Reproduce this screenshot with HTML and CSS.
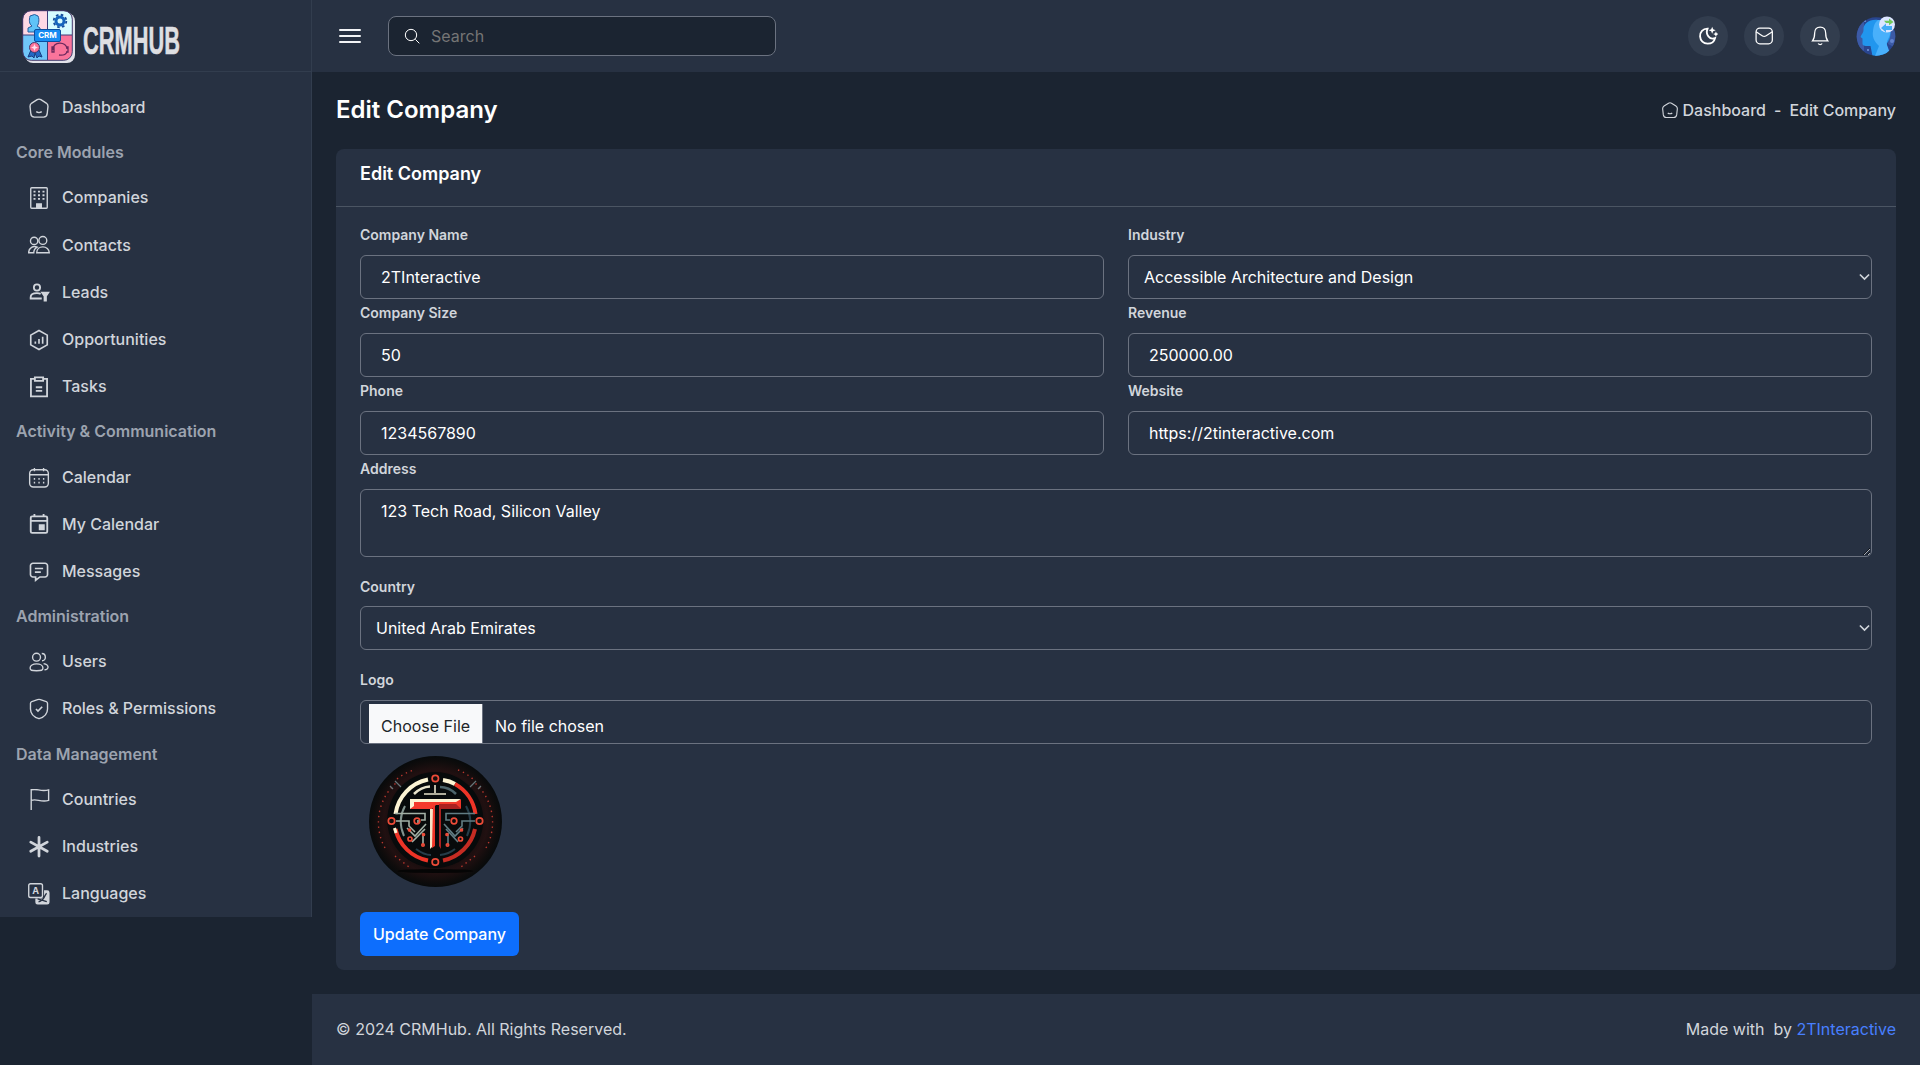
FILE: index.html
```html
<!DOCTYPE html>
<html lang="en">
<head>
<meta charset="utf-8">
<title>Edit Company - CRMHub</title>
<link rel="stylesheet" href="styles.css">
</head>
<body>
<svg class="sprite" aria-hidden="true">
  <symbol id="home" viewBox="0 0 24 24"><path d="M4.1 6.6 10 2.9a3.8 3.8 0 0 1 4 0l5.9 3.7c1.5 1 2 2 1.900 3.700l-.9 8.200c-.3 2.200-1.700 3.500-3.900 3.500H7c-2.200 0-3.600-1.300-3.900-3.500l-.9-8.200C2.100 8.600 2.600 7.600 4.100 6.600zM9 16c.9.700 1.900 1 3 1s2.100-.3 3-1"/></symbol>
  <symbol id="building" viewBox="0 0 24 24"><rect x="3" y=".8" width="18" height="22.400" rx="1"/><path d="M9.500 23v-4.500h5V23z" fill="currentColor"/><path class="dots" d="M6 5h2.200M10.900 5h2.200M15.800 5H18M6 9h2.200M10.900 9h2.200M15.800 9H18M6 13h2.200M10.900 13h2.200M15.800 13H18"/></symbol>
  <symbol id="contacts" viewBox="0 0 24 24"><circle cx="6.700" cy="7.500" r="4"/><circle cx="16.200" cy="7" r="4.300"/><path d="M9.500 20.500c0-4 3-6.500 6.700-6.500s7 2.500 7 6.500zM10 14.300c-4-2-9.300.7-9.300 6.200h5.600c0-2.700 1.200-4.800 3.700-6.200z"/></symbol>
  <symbol id="leads" viewBox="0 0 24 24"><g class="bold"><circle cx="9.800" cy="6" r="3.400"/><path d="M15 18H2.900v-1.500c0-3 3.300-4.400 6.900-4.400 1.700 0 3 .3 4 .8"/></g><path d="M15 11.500h7.500l-2.700 4v5h-2v-5z" fill="currentColor"/></symbol>
  <symbol id="chart" viewBox="0 0 24 24"><g class="mid"><path d="M12 1.700 21 6.700v10.600l-9 5-9-5V6.700zM8 13.500V16M12 11v5M16 8.500V16"/></g></symbol>
  <symbol id="task" viewBox="0 0 24 24"><g class="bold"><path d="M7 3.200H3.200v19h17.600v-19H17M7.500 1.500h9v3.800h-9zM8.500 12.300h7M8.500 16.300h7"/></g></symbol>
  <symbol id="calendar" viewBox="0 0 24 24"><rect x="1.800" y="3" width="20.400" height="18.800" rx="4"/><path d="M2 8.500h20M7 1v3.500M17 1v3.500"/><path class="dots" d="M6.300 13h1.500M11.300 13h1.500M16.300 13h1.500M6.300 17h1.500M11.300 17h1.500M16.300 17h1.500"/></symbol>
  <symbol id="mycal" viewBox="0 0 24 24"><g class="bold"><rect x="3" y="2.500" width="18" height="18" rx="1.500"/><path d="M3 7.500h18M7 0v3M17 0v3"/></g><path d="M12.500 12h5v5h-5z" fill="currentColor"/></symbol>
  <symbol id="message" viewBox="0 0 24 24"><g class="mid"><path d="M5.500 2.500h13a2.700 2.700 0 0 1 2.800 2.700v9.500a2.700 2.700 0 0 1-2.800 2.700H13L8.300 21v-3.600H5.500a2.700 2.700 0 0 1-2.800-2.700V5.200a2.700 2.700 0 0 1 2.800-2.700zM7.500 8.200h9M7.500 12.200h6.500"/></g></symbol>
  <symbol id="users" viewBox="0 0 24 24"><circle cx="9.300" cy="6.800" r="4.300"/><path d="M2.300 18.500c0-2.700 3-4.500 7-4.500s7 1.800 7 4.500-1.500 3-7 3-7-.3-7-3zM15 2.700c5.200 0 5.200 8 .3 8M17 13.800c6.600 1.200 6 6.700 1 6.700"/></symbol>
  <symbol id="shield" viewBox="0 0 24 24"><path d="M12 1.500c2 0 5 1.800 8 2.400 1 .3 1.300.8 1.300 2v6c0 5.300-3.700 8.800-9.300 10.700C6.400 20.700 2.700 17.200 2.700 11.900v-6c0-1.200.3-1.700 1.300-2C7 3.300 10 1.500 12 1.500z"/><path d="m8.700 12 2.200 2.200 4.600-4.700" class="mid"/></symbol>
  <symbol id="flag" viewBox="0 0 24 24"><path d="M3.500 0v23M3.500 1c6-2 10 2.300 19 0v11.500c-9 2.300-13-2.300-19 0"/></symbol>
  <symbol id="asterisk" viewBox="0 0 24 24"><path d="M12 1.500v20.400M3 6.700l18 10M21 6.700l-18 10" stroke-width="3" stroke-linecap="round"/></symbol>
  <symbol id="language" viewBox="0 0 24 24"><path d="M17.500 8H21a2.500 2.500 0 0 1 2.500 2.500V21a2.500 2.500 0 0 1-2.500 2.500H10.500A2.500 2.500 0 0 1 8 21v-4h7.500a2 2 0 0 0 2-2z" fill="currentColor" stroke="none"/><rect x=".8" y=".8" width="15" height="15" rx="2"/><text class="glyph" x="8.300" y="12.300">A</text><path class="knock" d="M20.500 11.500c-2.500 0-2 8-9 9M10.500 17.300l10 3"/></symbol>
  <symbol id="moon" viewBox="0 0 24 24"><path d="M11.500 3.200C5.800 3 2.200 7.500 2.500 12.500c.3 5 4 8.700 9 8.700 4.300 0 8-2.400 9-6.700-6.400 2.700-12-4.300-9-11.300z" stroke-width="2.200"/><path d="m17 .8 1.200 3 3 1.200-3 1.200-1.200 3-1.200-3-3-1.200 3-1.200zM21.500 6.500l1 2.200 2.200 1-2.200 1-1 2.200-1-2.200-2.200-1 2.200-1z" fill="currentColor" stroke="none"/></symbol>
  <symbol id="mail" viewBox="0 0 24 24"><rect x="2.500" y="2.500" width="19.500" height="18.800" rx="4.500"/><path d="m2.500 7 7.300 4.600a4.500 4.500 0 0 0 4.800 0L22 7"/></symbol>
  <symbol id="bell" viewBox="0 0 24 24"><path d="M12.200 1.200c-4.300 0-6.600 3-6.600 7.300 0 5-1 7.500-2.600 9.400h18.400c-1.600-1.900-2.600-4.400-2.600-9.400 0-4.300-2.300-7.300-6.600-7.300zM9.800 21c1.200 1.700 3.600 1.700 4.800 0"/></symbol>
  <symbol id="search" viewBox="0 0 24 24"><circle cx="10.500" cy="10.500" r="8.500"/><path d="m17 17 6 6"/></symbol>
</svg>

<div class="app">
  <aside class="sidebar">
    <a class="brand">
      <svg width="53" height="53" viewBox="0 0 53 53">
        <defs><clipPath id="tile"><rect x="1" y="1" width="49" height="49" rx="8"/></clipPath></defs>
        <rect x="3" y="3" width="50" height="50" rx="8" fill="#e2e3ea"/>
        <g clip-path="url(#tile)">
          <path fill="#fdd8e5" d="M0 0h25v25H0z"/><path fill="#d5fbff" d="M25 0h26v25H25z"/>
          <path fill="#70c6fa" d="M0 25h25v26H0z"/><path fill="#f9749b" d="M25 25h26v26H25z"/>
          <path d="M25.500 0v51M0 25h51" stroke="#3c3c78"/>
        </g>
        <rect x=".7" y=".7" width="49.600" height="49.600" rx="8.500" fill="none" stroke="#43376b"/>
        <path d="M8 6q5-3 8 0c2 4 0 10-1 10l3 2v4H6v-4l4-2C7 14 7 10 8 6z" fill="#5fc3f8" stroke="#235b9c"/>
        <circle cx="38" cy="11" r="6.300" fill="none" stroke="#154b9a" stroke-width="1.800" stroke-dasharray="2.600 2.350"/>
        <circle cx="38" cy="11" r="4" fill="#d5fbff" stroke="#1464bd" stroke-width="3"/>
        <path d="m9 40-3 7 4-1 2 2 1-5 2 5 2-2 3 1-3-7z" fill="#2368c5" stroke="#183d80"/>
        <circle cx="12.500" cy="37.500" r="5" fill="#ff7498" stroke="#48386b"/>
        <path d="m12.500 34 1 2.500 2.500 1-2.500 1-1 2.500-1-2.500-2.500-1 2.500-1z" fill="#ffe0ef"/>
        <path d="M31 40c-1-9 14-9 14-1M30 37v5h2v-5zM44 37h2v5h-2M45 42q-2 4-8 3" fill="none" stroke="#6b285d" stroke-width="1.300"/>
        <rect x="12.500" y="19.500" width="26" height="12" rx="1.500" fill="#168cf2" stroke="#0b4e9f"/>
        <text x="25.500" y="28.300" class="badge">CRM</text>
      </svg>
      <svg class="word" width="104" height="40" viewBox="0 0 104 40"><text class="wordmark" x="1" y="33" textLength="97" lengthAdjust="spacingAndGlyphs">CRMHUB</text></svg>
    </a>
    <nav class="menu">
      <a class="item"><svg class="icon"><use href="#home"/></svg>Dashboard</a>
      <div class="group">Core Modules</div>
      <a class="item"><svg class="icon"><use href="#building"/></svg>Companies</a>
      <a class="item item-tall"><svg class="icon"><use href="#contacts"/></svg>Contacts</a>
      <a class="item"><svg class="icon"><use href="#leads"/></svg>Leads</a>
      <a class="item"><svg class="icon"><use href="#chart"/></svg>Opportunities</a>
      <a class="item"><svg class="icon"><use href="#task"/></svg>Tasks</a>
      <div class="group group-tall">Activity &amp; Communication</div>
      <a class="item"><svg class="icon"><use href="#calendar"/></svg>Calendar</a>
      <a class="item"><svg class="icon"><use href="#mycal"/></svg>My Calendar</a>
      <a class="item"><svg class="icon"><use href="#message"/></svg>Messages</a>
      <div class="group">Administration</div>
      <a class="item"><svg class="icon"><use href="#users"/></svg>Users</a>
      <a class="item"><svg class="icon"><use href="#shield"/></svg>Roles &amp; Permissions</a>
      <div class="group group-tall group-last">Data Management</div>
      <a class="item"><svg class="icon"><use href="#flag"/></svg>Countries</a>
      <a class="item"><svg class="icon"><use href="#asterisk"/></svg>Industries</a>
      <a class="item"><svg class="icon"><use href="#language"/></svg>Languages</a>
    </nav>
  </aside>

  <div class="main">
    <header class="topbar">
      <div class="topbar-left">
        <div class="burger"><span></span><span></span><span></span></div>
        <label class="search"><svg><use href="#search"/></svg><input type="text" placeholder="Search"></label>
      </div>
      <div class="topbar-right">
        <span class="round"><svg><use href="#moon"/></svg></span>
        <span class="round"><svg><use href="#mail"/></svg></span>
        <span class="round"><svg><use href="#bell"/></svg></span>
        <svg class="avatar" viewBox="0 0 40 40">
          <defs><clipPath id="face"><circle cx="20" cy="20.500" r="19.300"/></clipPath></defs>
          <g clip-path="url(#face)">
            <path fill="#29458f" d="M0 0h40v40H0z"/>
            <path fill="#3c5aa6" d="M0 8 8 3v32l-8-6zM34 14h6v18l-8-4z"/>
            <path fill="#2196ee" d="M22 4C13 3 7 8 7.500 14c0 3-2 4-3 7l2 1.500v5c0 3 4 2.500 8 2.500l2 10h17l-3-12c5-6 5-13 2-18-2-3-5-6-10.500-6z"/>
            <path fill="#49b0fb" d="M22 4c8-1 13 6 12.500 12-.5 6-4.500 8-3.500 13l4 11H19l4-10c-5-5-7-9-6-15 .6-4 1-8 5-11z"/>
            <circle cx="36" cy="25" r="2" fill="#6383cf"/><circle cx="9" cy="5" r="1" fill="#7697db"/><circle cx="12" cy="34" r="1" fill="#7697db"/>
          </g>
          <circle cx="31" cy="8.500" r="8" fill="#dce5ff"/>
          <path d="M28 4.800h5V2.500l4.500 3.500-4.500 3.300V7h-3z" fill="#72c95c"/><path d="m25 12 5-4.500v2.500h6v4h-6v2.500z" fill="#45acf6"/>
        </svg>
      </div>
    </header>

    <main class="content">
      <div class="page-head">
        <h1>Edit Company</h1>
        <div class="crumbs"><svg><use href="#home"/></svg><span>Dashboard</span><span class="dash">-</span><span>Edit Company</span></div>
      </div>
      <section class="card">
        <h2 class="card-head">Edit Company</h2>
        <form class="form">
          <div class="field"><label>Company Name</label><input class="control" type="text" value="2TInteractive"></div>
          <div class="field"><label>Industry</label><div class="control select">Accessible Architecture and Design<svg viewBox="0 0 12 8"><path d="m1 1.300 5 5 5-5"/></svg></div></div>
          <div class="field"><label>Company Size</label><input class="control" type="text" value="50"></div>
          <div class="field"><label>Revenue</label><input class="control" type="text" value="250000.00"></div>
          <div class="field"><label>Phone</label><input class="control" type="text" value="1234567890"></div>
          <div class="field"><label>Website</label><input class="control" type="text" value="https://2tinteractive.com"></div>
          <div class="field wide address"><label>Address</label><textarea class="control area">123 Tech Road, Silicon Valley</textarea></div>
          <div class="field wide country"><label>Country</label><div class="control select">United Arab Emirates<svg viewBox="0 0 12 8"><path d="m1 1.300 5 5 5-5"/></svg></div></div>
          <div class="field wide"><label>Logo</label><div class="control file"><span class="choose">Choose File</span><span>No file chosen</span></div></div>
        </form>
        <svg class="company-logo" viewBox="9 11 133 131">
          <defs>
            <radialGradient id="disc"><stop offset="0" stop-color="#080909"/><stop offset=".6" stop-color="#120c0c"/><stop offset=".78" stop-color="#211011"/><stop offset=".92" stop-color="#0f0c0c"/><stop offset="1" stop-color="#070a0b"/></radialGradient>
          </defs>
          <ellipse cx="75.500" cy="76.500" rx="66.500" ry="65.500" fill="url(#disc)"/>
          <ellipse cx="75.500" cy="126" rx="38" ry="2" fill="#050505"/>
          <circle cx="75.300" cy="75" r="48" fill="#070a0b"/>
          <g fill="none">
            <path d="M25 103a53 53 0 0 1 11-65M126 103a53 53 0 0 0-11-65" stroke="#b8372e" stroke-width="1.400" stroke-dasharray="1.400 3.900"/>
            <path d="M37 34q7-6 17-9M98 25q9 3 17 11M35 111l14 11M115 111l-14 11" stroke="#b8372e" stroke-width="1.400" stroke-dasharray="1.400 3.900"/>
            <path d="m30 41 3 3M35 36l6 6M121 41l-3 3M116 36l-6 6" stroke="#66767a" stroke-width="1.200"/>
            <path d="M35.500 69A41 41 0 0 1 68 34.500" stroke="#fcf4d4" stroke-width="4"/>
            <path d="M83 35q7 1 12 4" stroke="#fcf4d4" stroke-width="4"/>
            <path d="M95 39a41 41 0 0 1 20.500 30M35.500 84A41 41 0 0 0 68 115.500" stroke="#ee3427" stroke-width="4"/>
            <path d="M115 84A41 41 0 0 1 83 115.500" stroke="#c52c23" stroke-width="4"/>
            <path d="m34.500 83 1.500 5" stroke="#fcf4d4" stroke-width="3"/>
            <path d="M54 49q7-7 16-7.500" stroke="#e9e4cc" stroke-width="2.500"/>
            <path d="M80 42q9 0 16 7" stroke="#4d646b" stroke-width="2.500"/>
            <path d="M45 61q-8 14-1 30" stroke="#82938e" stroke-width="2"/>
            <path d="M106 61q8 14 1 30M56 104q8 6 15 6M80 110q9-1 15-6" stroke="#263d49" stroke-width="2"/>
            <path d="M75 40v8M64 49h22" stroke="#e9e4cc" stroke-width="1.600"/>
            <path d="M35 68.500h30V75h-4M36 76h13v5l6 6M47 83l8 8 11-12M52 97l13-13M58 75v3M63 99V88" stroke="#a3b1a6" stroke-width="1.600"/>
            <path d="M115 68.500H86V75h4M115 76h-13v5l-6 6M103 83l-8 8-11-12M98 97 86 84M88 99V88" stroke="#627d84" stroke-width="1.600"/>
            <g stroke="#ed4b38" stroke-width="1.700">
              <g fill="#140e0d"><circle cx="75.300" cy="33.500" r="3.200"/><circle cx="31.500" cy="76" r="3.200"/><circle cx="119.500" cy="76" r="3.200"/><circle cx="75.300" cy="117" r="3.200"/></g>
              <circle cx="57" cy="76" r="2.800"/><circle cx="94" cy="76" r="2.800"/><circle cx="50" cy="94" r="2"/><circle cx="100.500" cy="94" r="2"/><circle cx="49.500" cy="85" r="1"/><circle cx="101.500" cy="85" r="1"/><circle cx="63.500" cy="89.500" r="1"/><circle cx="87" cy="89.500" r="1"/><circle cx="63" cy="100" r="1.200"/><circle cx="87.500" cy="100" r="1.200"/>
            </g>
          </g>
          <path fill="#f43a2b" d="M50 64h22l4-4h25v-5H54z"/>
          <path fill="#ab211f" d="M79 59h18l4 5H81v40l-2-3z"/>
          <path fill="#fcf4d4" d="M50 54h51l-5 3H54v4l-4 3z"/>
          <path fill="#ef3527" d="m101 54-5 5 5 5z"/>
          <path fill="#f7e5c7" d="M70 64h3v37l-3 3z"/><path fill="#ef3527" d="M73 61h2v40l-3 2z"/>
        </svg>
        <button class="submit" type="button">Update Company</button>
      </section>
    </main>

    <footer class="footer"><span>© 2024 CRMHub. All Rights Reserved.</span><span class="made">Made with&nbsp; by <a>2TInteractive</a></span></footer>
  </div>
</div>
</body>
</html>
```
FILE: styles.css
```css
* { box-sizing: border-box; }
body {
  margin: 0;
  background: #1b2431;
  color: #d1d5db;
  font: 500 16px/24px Inter, sans-serif;
  overflow: hidden;
}
.sprite { display: none; }
symbol { fill: none; stroke: currentColor; stroke-width: 1.5; }
.mid { stroke-width: 1.8; }
.bold { stroke-width: 2; }
.dots { stroke-width: 2; }
.glyph { fill: currentColor; stroke: none; font: 700 10px Inter, sans-serif; text-anchor: middle; }
.knock { stroke: #273142; stroke-width: 1.6; }

.app { display: flex; align-items: flex-start; height: 1065px; }
.sidebar { width: 312px; height: 917px; background: #273142; border-right: 1px solid #323d4e; flex: none; }
.brand { display: flex; height: 72px; padding: 10px 0 0 22px; gap: 7px; border-bottom: 1px solid #323d4e; }
.word { margin-top: 11px; overflow: visible; }
.badge { fill: #fff; font: 700 8px Inter, sans-serif; text-anchor: middle; }
.wordmark { fill: #dedfe2; stroke: #dedfe2; stroke-width: .6; font: 700 39px "Liberation Sans", sans-serif; }
.menu { padding-top: 12px; }
.item { display: flex; align-items: center; height: 47px; padding: 0 0 1px 28px; gap: 12px; }
.item-tall { height: 48px; }
.icon { width: 22px; height: 22px; flex: none; margin-top: 1px; }
.group { height: 43px; padding: 9px 16px; font-weight: 600; color: #9ca3af; }
.group-tall { height: 44px; }
.group-last { padding-top: 10px; }

.main { flex: 1; display: flex; flex-direction: column; height: 1066px; }
.topbar { flex: none; height: 72px; padding: 0 24px 0 27px; background: #273142; display: flex; justify-content: space-between; align-items: center; }
.topbar-left { display: flex; align-items: center; gap: 27px; }
.burger { width: 22px; display: flex; flex-direction: column; gap: 4px; }
.burger span { height: 2px; background: #f3f4f6; border-radius: 1px; }
.search { display: flex; align-items: center; width: 388px; height: 40px; padding: 0 15px; gap: 11px; background: #1b2431; border: 1px solid #6b7280; border-radius: 8px; }
.search svg { width: 16px; height: 16px; color: #fff; }
.search input { flex: 1; border: 0; padding: 0; background: none; font: 400 16px Inter, sans-serif; }
.search input::placeholder { color: #757575; }
.topbar-right { display: flex; gap: 16px; color: #fff; }
.round { width: 40px; height: 40px; border-radius: 50%; background: #323d4e; display: flex; align-items: center; justify-content: center; }
.round svg { width: 20px; height: 20px; overflow: visible; }
.avatar { width: 40px; height: 40px; }

.content { flex: none; padding: 24px; }
.page-head { display: flex; justify-content: space-between; align-items: center; height: 28px; margin-bottom: 25px; }
h1 { margin: 0; font-size: 24px; font-weight: 600; color: #fff; }
.crumbs { display: flex; align-items: center; }
.crumbs svg { width: 18px; height: 18px; margin-right: 4px; }
.dash { margin: 0 8px; }

.card { height: 821px; background: #273142; border-radius: 8px; }
.card-head { margin: 0; height: 58px; padding: 13px 24px; border-bottom: 1px solid #4b5563; font-size: 18px; font-weight: 600; color: #fff; }
.form { display: grid; grid-template-columns: 1fr 1fr; column-gap: 24px; padding: 14px 24px 0; }
.field { display: flex; flex-direction: column; height: 78px; }
.field label { flex: none; height: 34px; padding-top: 2px; font-size: 14px; font-weight: 600; }
.wide { grid-column: 1 / -1; }
.address { height: 118px; }
.country { height: 93px; }
.country label { height: 33px; }
.control { display: flex; flex: none; align-items: center; width: 100%; height: 44px; padding: 0 20px; background: none; border: 1px solid #6b7280; border-radius: 6px; color: #fff; font: 400 16px/24px Inter, sans-serif; }
.area { height: 68px; padding-top: 9px; resize: vertical; }
.select { justify-content: space-between; padding: 0 1px 0 15px; }
.select svg { width: 11px; height: 8px; fill: none; stroke: #d1d5db; stroke-width: 1.8; }
.file { padding: 3px 8px 0; align-items: stretch; gap: 12px; line-height: 45px; overflow: hidden; }
.choose { width: 114px; padding-left: 12px; background: #f8f9fa; border-right: 1px solid #6b7280; color: #212529; }
.company-logo { display: block; width: 133px; height: 131px; margin: 12px 0 25px 33px; }
.submit { display: block; margin-left: 24px; width: 159px; height: 44px; padding: 0; border: 0; border-radius: 6px; background: #0d6efd; color: #fff; font: 500 16px Inter, sans-serif; }

.footer { flex: 1; display: flex; justify-content: space-between; padding: 23px 24px; background: #273142; font-weight: 400; }
.footer a { color: #487fff; }
```
